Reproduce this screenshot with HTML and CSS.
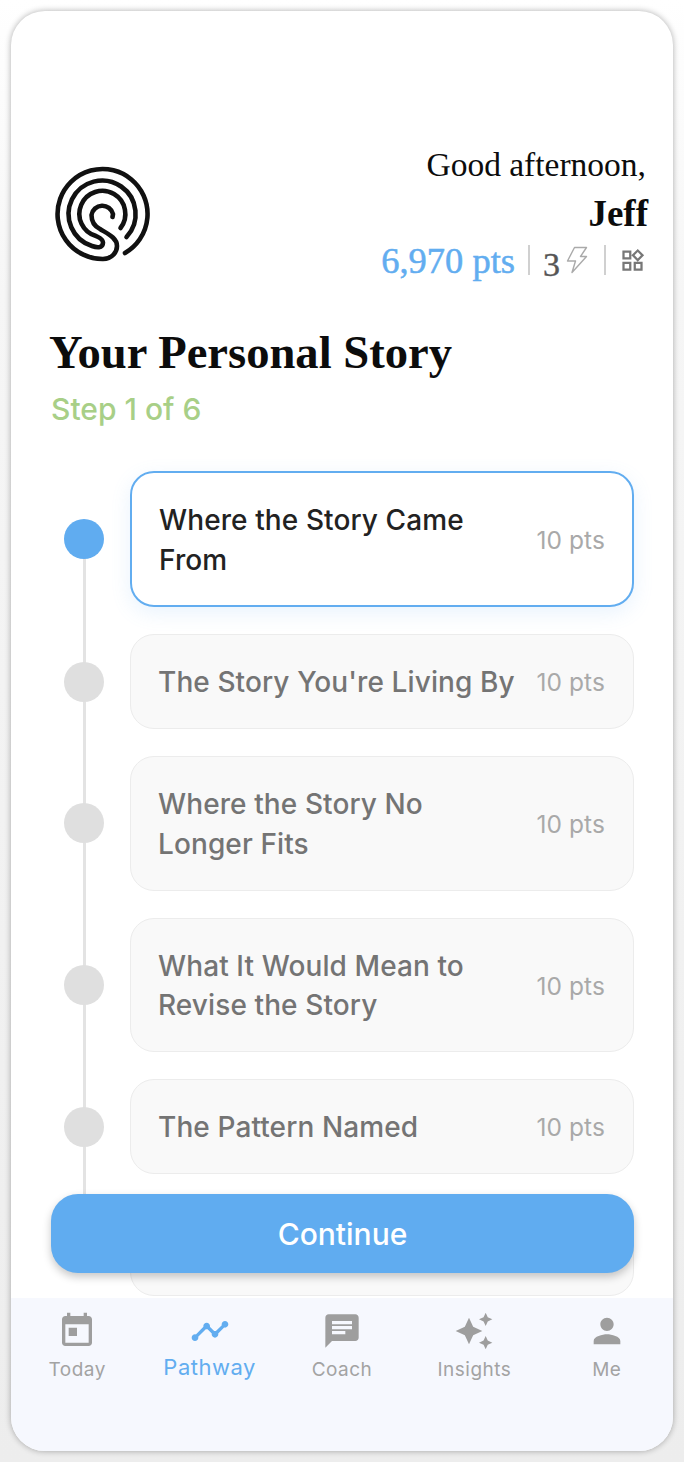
FILE: index.html
```html
<!DOCTYPE html>
<html lang="en">
<head>
<meta charset="utf-8">
<title>Your Personal Story</title>
<link rel="stylesheet" href="styles.css">
</head>
<body>
<div class="phone">
  <main class="content">
    <header class="top">
      <svg class="logo" viewBox="53 164 100 100" aria-hidden="true">
        <g fill="none" stroke="#111" stroke-width="4.6" stroke-linecap="round" stroke-linejoin="round">
          <path d="M125 253 A45 45 0 1 0 103 259 C112 259 117 252 117 246 C117 238 108 234 100 229 C94 226 91.5 221 91.5 215 A11 11 0 0 1 113 214 L112.5 217"/>
          <path d="M126.500 237 A33.500 33.500 0 1 0 92 246 C96 247.500 103 249 103 242.500 C103 239 99 237.500 96 236 A23 23 0 1 1 120.500 228"/>
        </g>
      </svg>
      <div class="greet">
        <div class="hello">Good afternoon,</div>
        <div class="name">Jeff</div>
        <div class="stats">
          <span class="points">6,970 pts</span>
          <span class="sep"></span>
          <span class="streak">3</span>
          <svg class="bolt" viewBox="0 0 22 28" aria-hidden="true"><path d="M8.500 1.500H20.500L14.500 10.500H20.500L6 26.500L9.500 15H1.500Z" fill="none" stroke="#aaa" stroke-width="1.400" stroke-linejoin="round"/></svg>
          <span class="sep sep-2"></span>
          <svg class="widgets" viewBox="0 0 24 24" aria-hidden="true"><path fill="#777" d="M16.660 4.520l2.830 2.830-2.830 2.830-2.830-2.830 2.830-2.830M9 5v4H5V5h4m10 10v4h-4v-4h4M9 15v4H5v-4h4m7.660-13.310L11 7.340 16.660 13l5.660-5.660-5.660-5.650zM11 3H3v8h8V3zm10 10h-8v8h8v-8zm-10 0H3v8h8v-8z"/></svg>
        </div>
      </div>
    </header>
    <h1 class="title">Your Personal Story</h1>
    <p class="step">Step 1 of 6</p>
    <ol class="steps">
      <li class="row current"><span class="dot"></span><div class="card"><span class="card-title">Where the Story Came From</span><span class="pts">10 pts</span></div></li>
      <li class="row"><span class="dot"></span><div class="card"><span class="card-title">The Story You're Living By</span><span class="pts">10 pts</span></div></li>
      <li class="row"><span class="dot"></span><div class="card"><span class="card-title">Where the Story No Longer Fits</span><span class="pts">10 pts</span></div></li>
      <li class="row"><span class="dot"></span><div class="card"><span class="card-title">What It Would Mean to Revise the Story</span><span class="pts">10 pts</span></div></li>
      <li class="row"><span class="dot"></span><div class="card"><span class="card-title">The Pattern Named</span><span class="pts">10 pts</span></div></li>
      <li class="row"><span class="dot"></span><div class="card"><span class="card-title">&nbsp;</span><span class="pts"></span></div></li>
    </ol>
    <button class="continue" type="button">Continue</button>
  </main>
  <nav class="nav">
    <div class="tab">
      <svg class="ico" viewBox="0 0 24 24"><path d="M19 3h-1V1h-2v2H8V1H6v2H5c-1.110 0-1.990.9-1.990 2L3 19c0 1.100.89 2 2 2h14c1.100 0 2-.9 2-2V5c0-1.100-.9-2-2-2zm0 16H5V8h14v11zM7 10h5v5H7z"/></svg>
      <span class="lab">Today</span>
    </div>
    <div class="tab active">
      <svg class="ico" viewBox="0 0 24 24"><path d="M23 8c0 1.100-.9 2-2 2-.18 0-.35-.02-.51-.07l-3.560 3.550c.05.16.07.34.07.52 0 1.100-.9 2-2 2s-2-.9-2-2c0-.18.02-.36.07-.52l-2.550-2.550c-.16.05-.34.07-.52.07s-.36-.02-.52-.07l-4.550 4.560c.05.16.07.33.07.51 0 1.100-.9 2-2 2s-2-.9-2-2 .9-2 2-2c.18 0 .35.02.51.07l4.560-4.550C8.020 9.360 8 9.180 8 9c0-1.100.9-2 2-2s2 .9 2 2c0 .18-.02.36-.07.52l2.550 2.550c.16-.05.34-.07.52-.07s.36.02.52.07l3.550-3.560C19.020 8.350 19 8.180 19 8c0-1.100.9-2 2-2s2 .9 2 2z"/></svg>
      <span class="lab">Pathway</span>
    </div>
    <div class="tab">
      <svg class="ico" viewBox="0 0 24 24"><path d="M20 2H4c-1.100 0-1.990.9-1.990 2L2 22l4-4h14c1.100 0 2-.9 2-2V4c0-1.100-.9-2-2-2zM6 9h12v2H6V9zm8 5H6v-2h8v2zm4-6H6V6h12v2z"/></svg>
      <span class="lab">Coach</span>
    </div>
    <div class="tab">
      <svg class="ico" viewBox="0 0 24 24"><path d="M19 9l1.250-2.750L23 5l-2.750-1.250L19 1l-1.250 2.750L15 5l2.750 1.250L19 9zm-7.500.5L9 4 6.500 9.500 1 12l5.500 2.500L9 20l2.500-5.500L17 12l-5.500-2.500zM19 15l-1.250 2.750L15 19l2.750 1.250L19 23l1.250-2.750L23 19l-2.750-1.250L19 15z"/></svg>
      <span class="lab">Insights</span>
    </div>
    <div class="tab">
      <svg class="ico" viewBox="0 0 24 24"><path d="M12 12c2.210 0 4-1.790 4-4s-1.790-4-4-4-4 1.790-4 4 1.790 4 4 4zm0 2c-2.670 0-8 1.340-8 4v2h16v-2c0-2.660-5.330-4-8-4z"/></svg>
      <span class="lab">Me</span>
    </div>
  </nav>
</div>
</body>
</html>
```
FILE: styles.css
```css
* { box-sizing: border-box; }
html, body { margin: 0; height: 100%; }
body {
  background: linear-gradient(#fff, #f6f6f6 20%, #ededed);
  padding: 11px;
  font-family: "Inter", "Liberation Sans", sans-serif;
  overflow: hidden;
}
.phone {
  position: relative;
  width: 662px;
  height: 1440px;
  background: #fff;
  border-radius: 34px;
  overflow: hidden;
  display: flex;
  flex-direction: column;
  box-shadow: 0 0 6px rgba(0,0,0,.32);
}
.content {
  position: relative;
  flex: 1;
  min-height: 0;
  padding: 132px 39px 0 39px;
  overflow: hidden;
}
.top {
  display: flex;
  justify-content: space-between;
  align-items: center;
  padding: 0 0 0 3px;
  margin-right: -12px;
}
.logo { width: 100px; height: 100px; display: block; flex: none; margin-top: 2px; }
.greet { text-align: right; color: #0c0c0c; font-family: "Liberation Serif", serif; }
.hello { font-size: 33.500px; line-height: 44px; }
.name { font-size: 37px; line-height: 50px; font-weight: 700; margin: 2px -2px -2px 0; }
.stats { display: flex; align-items: center; justify-content: flex-end; height: 46px; }
.points { color: #62adf0; font-size: 36.500px; -webkit-text-stroke: .5px #62adf0; margin-right: -1px; }
.sep { width: 2px; height: 30px; background: #d0d0d0; margin: 0 13px 0 14px; }
.sep-2 { margin: 0 13px 0 16px; }
.streak { color: #555; font-size: 34px; margin-top: 10px; -webkit-text-stroke: .4px #555; }
.bolt { width: 22px; height: 28px; margin-left: 6px; }
.widgets { width: 27px; height: 27px; }
.title {
  margin: 39px 0 0 -1px;
  font-family: "Liberation Serif", serif;
  font-size: 46.600px;
  line-height: 60px;
  font-weight: 700;
  color: #0c0c0c;
}
.step { margin: 9px 0 0 1px; color: #a8cf87; font-size: 30px; line-height: 36px; font-weight: 500; }
.steps {
  position: relative;
  list-style: none;
  margin: 44px 0 0;
  padding: 0;
  display: flex;
  flex-direction: column;
  gap: 27px;
}
.steps::before {
  content: "";
  position: absolute;
  left: 32.500px;
  top: 60px;
  bottom: 40px;
  width: 3px;
  background: #e3e3e3;
}
.row { position: relative; display: flex; align-items: center; }
.dot { width: 40px; height: 40px; border-radius: 50%; background: #dfdfdf; flex: none; margin: 0 26px 0 14px; }
.card {
  flex: 1;
  min-width: 0;
  min-height: 95px;
  padding: 28.250px 28px 25.250px 27px;
  display: flex;
  align-items: center;
  justify-content: space-between;
  gap: 20px;
  border: 1.500px solid #ececec;
  border-radius: 24px;
  background: #f9f9f9;
  color: #747474;
  font-size: 28px;
  line-height: 39.500px;
  font-weight: 500;
  letter-spacing: .1px;
}
.card-title { flex: 1; min-width: 0; }
.pts { flex: none; font-size: 24.500px; font-weight: 400; color: #a9a9a9; }
.current .dot { background: #60acf0; }
.current .card {
  background: #fff;
  padding: 28px 27px 25px 27px;
  border: 2.500px solid #62adf0;
  color: #222;
  box-shadow: 0 6px 20px rgba(98,173,240,.14);
}
.continue {
  position: absolute;
  left: 40px;
  right: 39px;
  bottom: 25px;
  height: 79px;
  border: 0;
  border-radius: 27px;
  background: #60acf0;
  color: #fff;
  font: 500 30px "Inter", sans-serif;
  box-shadow: 0 4px 8px rgba(0,0,0,.22);
}
.nav {
  flex: none;
  height: 153px;
  background: #f6f8fe;
  display: grid;
  grid-template-columns: repeat(5, 1fr);
  padding-top: 13px;
}
.tab { display: flex; flex-direction: column; align-items: center; color: #a3a3a3; }
.ico { width: 40px; height: 40px; fill: #9e9e9e; display: block; }
.lab { font-size: 19px; line-height: 24px; margin-top: 7px; letter-spacing: .5px; }
.active { color: #62adf0; }
.active .ico { fill: #62adf0; }
.active .lab { font-size: 22px; line-height: 26px; margin-top: 3px; }
```
